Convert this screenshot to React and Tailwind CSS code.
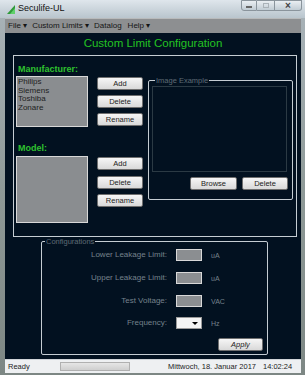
import React from 'react'

function Btn({ children, className = '' }) {
  return (
    <button
      className={`h-[13px] border border-[#6f6f6f] rounded-[2px] bg-linear-to-b from-[#f6f6f6] to-[#d9d9d9] text-[7.5px] leading-none text-[#222] ${className}`}
    >
      {children}
    </button>
  )
}

function ConfigRow({ label, unit, select, className = '' }) {
  return (
    <div className={`flex items-center h-[12px] ${className}`}>
      <div className="w-[125px] text-right text-[8px] leading-none text-[#75828c]">{label}</div>
      {select ? (
        <div className="ml-[9px] w-[26px] h-[12px] bg-[#f4f4f4] border border-[#9a9a9a] flex items-center justify-end pr-[3px]">
          <span className="w-0 h-0 border-l-[3px] border-r-[3px] border-t-[3px] border-l-transparent border-r-transparent border-t-black" />
        </div>
      ) : (
        <div className="ml-[9px] w-[26px] h-[12px] bg-[#8b8e91] border border-[#d8d8d8]" />
      )}
      <div className="ml-[9px] text-[7px] leading-none text-[#75828c]">{unit}</div>
    </div>
  )
}

export default function App() {
  return (
    <div className="w-[305px] h-[375px] overflow-hidden bg-linear-to-b from-[#aab4ba] via-[#8f9a98] to-[#7d8784] font-['Liberation_Sans',Arial,sans-serif] select-none">
      {/* title bar */}
      <div className="h-[18px] flex items-center bg-linear-to-b from-[#dfe6ec] to-[#b9c5cd]">
        <svg className="ml-[7px]" width="8" height="9" viewBox="0 0 8 9">
          <polygon points="0,9 8,0 8,9" fill="#2f9a3a" />
          <polygon points="3,9 8,3 8,9" fill="#5fd06a" />
        </svg>
        <span className="ml-[3px] text-[9px] text-[#111]">Seculife-UL</span>
        <div className="ml-auto mr-[3px] self-start flex">
          <div className="w-[16px] h-[11px] border border-[#8a949c] rounded-bl-[3px] bg-linear-to-b from-[#e9eef2] to-[#c1ccd4] flex items-end justify-center pb-[2px]">
            <div className="w-[6px] h-[2px] bg-white border border-[#666]" />
          </div>
          <div className="w-[18px] h-[11px] border-y border-r border-[#8a949c] bg-linear-to-b from-[#e9eef2] to-[#c1ccd4] flex items-center justify-center">
            <div className="w-[6px] h-[5px] border border-[#aab2b8]" />
          </div>
          <div className="w-[27px] h-[11px] border-y border-r border-[#8a949c] rounded-br-[3px] bg-linear-to-b from-[#e9eef2] to-[#c1ccd4] flex items-center justify-center text-[10px] font-bold leading-none text-[#444]">
            ×
          </div>
        </div>
      </div>

      <div className="ml-[5px] w-[296px]">
        {/* menu bar */}
        <div className="h-[15px] bg-[#8d8f91] border-t border-[#b8babb] flex items-center text-[8px] text-[#151515] leading-none whitespace-nowrap">
          <span className="ml-[3px]">File ▾</span>
          <span className="ml-[5px]">Custom Limits ▾</span>
          <span className="ml-[5px]">Datalog</span>
          <span className="ml-[6px]">Help ▾</span>
        </div>

        {/* content */}
        <div className="h-[326px] bg-[#021120] flex flex-col pt-[3px]">
          <h1 className="h-[14px] leading-[14px] text-[11.5px] text-center text-[#22c322]">Custom Limit Configuration</h1>

          <div className="mt-[5px] ml-[8px] w-[284px] h-[182px] border border-[#c5cdd3] flex pl-[2px]">
            <div className="w-[130px] pt-[8px]">
              <div className="h-[10px] leading-[10px] text-[9px] font-bold text-[#2fc12f] pl-[2px]">Manufacturer:</div>
              <div className="flex mt-[2px]">
                <div className="w-[72px] h-[51px] bg-[#8a8d90] border border-[#d8d8d8] px-[1px] pt-[1px] text-[8px] leading-[8.5px] text-[#1e1e1e]">
                  <div>Philips</div>
                  <div>Siemens</div>
                  <div>Toshiba</div>
                  <div>Zonare</div>
                </div>
                <div className="ml-[9px] pt-[1px] flex flex-col gap-[5px]">
                  <Btn className="w-[46px]">Add</Btn>
                  <Btn className="w-[46px]">Delete</Btn>
                  <Btn className="w-[46px]">Rename</Btn>
                </div>
              </div>
              <div className="mt-[16px] h-[10px] leading-[10px] text-[9px] font-bold text-[#2fc12f] pl-[2px]">Model:</div>
              <div className="flex mt-[3px]">
                <div className="w-[72px] h-[67px] bg-[#8a8d90] border border-[#d8d8d8]" />
                <div className="ml-[9px] pt-[1px] flex flex-col">
                  <Btn className="w-[46px]">Add</Btn>
                  <Btn className="w-[46px] mt-[6px]">Delete</Btn>
                  <Btn className="w-[46px] mt-[5px]">Rename</Btn>
                </div>
              </div>
            </div>

            <fieldset className="ml-[2px] mt-[20px] w-[145px] h-[124px] border border-[#c5cdd3] rounded-[2px] pl-[3px] pb-[9px] flex flex-col">
              <legend className="ml-[3px] px-[1px] text-[7.5px] leading-[9px] text-[#5f6c76]">Image Example</legend>
              <div className="mt-[1px] w-[135px] h-[87px] border border-[#2b3a44]" />
              <div className="mt-[5px] flex ml-[38px] gap-[5px]">
                <Btn className="w-[47px] h-[12px]">Browse</Btn>
                <Btn className="w-[46px] h-[12px]">Delete</Btn>
              </div>
            </fieldset>
          </div>

          <fieldset className="ml-[36px] w-[227px] border border-[#c5cdd3] rounded-[2px] pb-[3px] flex flex-col">
            <legend className="ml-[3px] px-[1px] text-[7.5px] leading-[9px] text-[#5f6c76]">Configurations</legend>
            <ConfigRow className="mt-[3px]" label="Lower Leakage Limit:" unit="uA" />
            <ConfigRow className="mt-[11px]" label="Upper Leakage Limit:" unit="uA" />
            <ConfigRow className="mt-[11px]" label="Test Voltage:" unit="VAC" />
            <ConfigRow className="mt-[10px]" label="Frequency:" unit="Hz" select />
            <div className="mt-[9px] flex justify-end pr-[4px]">
              <Btn className="w-[45px] italic">Apply</Btn>
            </div>
          </fieldset>
        </div>

        {/* status bar */}
        <div className="h-[14px] bg-[#eef0f2] border-t border-[#d0d4d8] flex items-center text-[7.5px] leading-none text-[#222] whitespace-nowrap">
          <span className="ml-[3px] w-[52px]">Ready</span>
          <div className="w-[70px] h-[9px] border border-[#b0b0b0] bg-linear-to-b from-[#e6e6e6] to-[#cfcfcf]" />
          <span className="ml-[38px]">Mittwoch, 18. Januar 2017</span>
          <span className="ml-[7px]">14:02:24</span>
        </div>
      </div>
    </div>
  )
}
